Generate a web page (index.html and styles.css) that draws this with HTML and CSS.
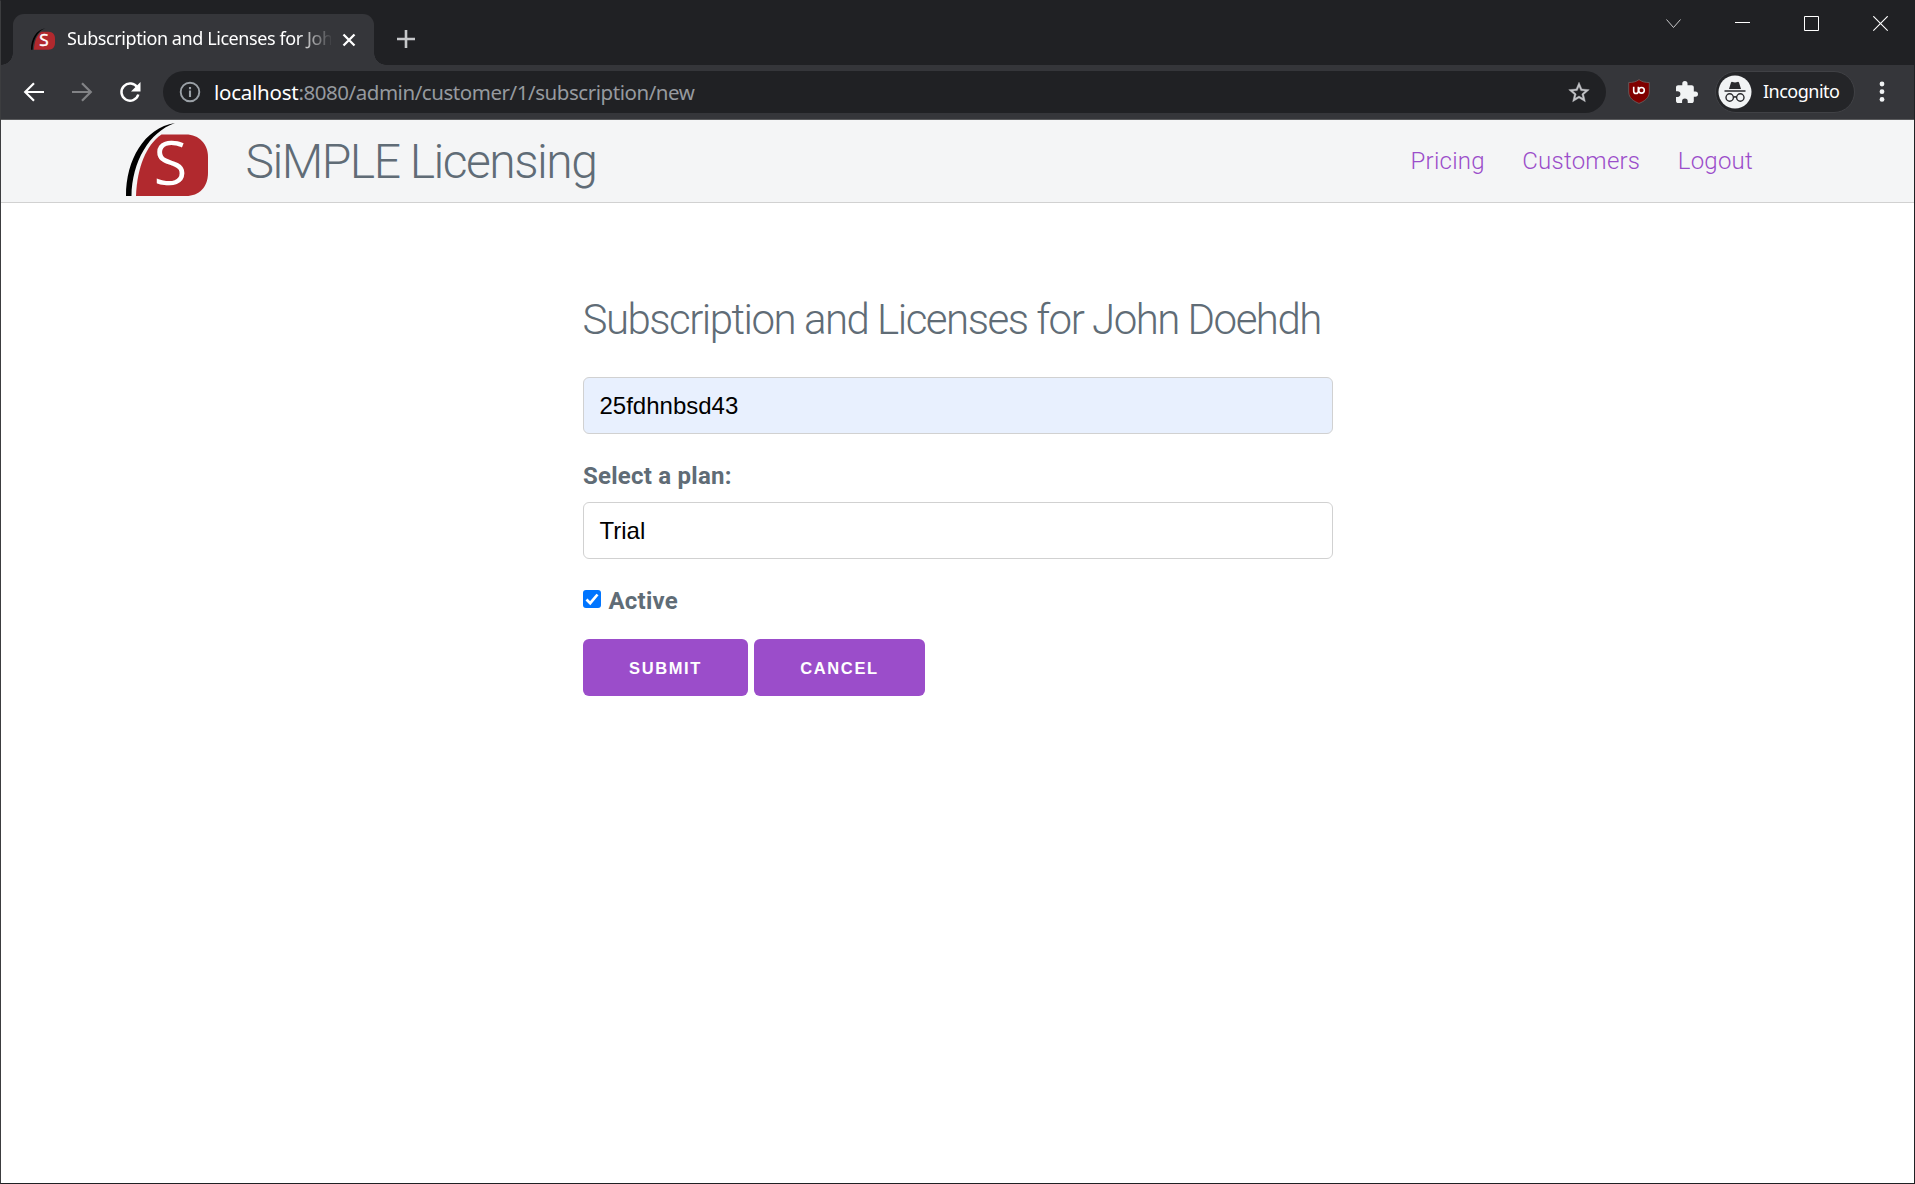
FILE: index.html
```html
<!DOCTYPE html>
<html lang="en">
<head>
<meta charset="utf-8">
<title>Subscription and Licenses for John Doehdh</title>
<link rel="stylesheet" href="styles.css">
</head>
<body>
<svg class="defs" width="0" height="0">
  <symbol id="logo" viewBox="0 0 82 73">
    <path fill="#000" d="M0 73C0 37 18 5 49 0C23 9 6 39 5.500 73Z"/>
    <path fill="#b1292e" d="M10 73C11 45 20 22 35.500 11.500H60C73 11.500 82 21 82 34V50C82 64 73 73 60 73Z"/>
    <text x="28.500" y="61.300" font-family="Open Sans, sans-serif" font-size="58" fill="#fff" stroke="#fff" stroke-width="1.700" textLength="32" lengthAdjust="spacingAndGlyphs">S</text>
  </symbol>
</svg>
<div class="window">
  <div class="tabstrip">
    <div class="tab">
      <svg class="favicon" width="24" height="22"><use href="#logo"/></svg>
      <span class="tab-title">Subscription and Licenses for Joh</span>
      <svg class="tab-close" width="14" height="14" viewBox="0 0 14 14"><path d="M1.500 1.500l11 11M12.500 1.500l-11 11" stroke="#fff" stroke-width="2.300"/></svg>
    </div>
    <svg class="new-tab" width="18" height="18" viewBox="0 0 18 18"><path d="M9 0v18M0 9h18" stroke="#c6c8ca" stroke-width="2.600"/></svg>
    <div class="controls">
      <svg width="15" height="16" viewBox="0 0 15 16"><path d="M.5 3.500l7 8 7-8" fill="none" stroke="#c8c9ca"/></svg>
      <svg width="15" height="16" viewBox="0 0 15 16"><path d="M0 6.500h15" stroke="#fff"/></svg>
      <svg width="15" height="16" viewBox="0 0 15 16"><path d="M.5 .5h14v14H.5z" fill="none" stroke="#fff"/></svg>
      <svg width="15" height="16" viewBox="0 0 15 16"><path d="M.3 .3l14.400 14.400M14.700 .3L.3 14.700" stroke="#fff" stroke-width="1.200"/></svg>
    </div>
  </div>
  <div class="toolbar">
    <svg class="nav-icon" width="22" height="22" viewBox="0 0 22 22"><path d="M21 11H2.500M11 2.200L2.200 11l8.800 8.800" fill="none" stroke="#fff" stroke-width="2.200"/></svg>
    <svg class="nav-icon" width="22" height="22" viewBox="0 0 22 22"><path d="M1 11h18.500M11 2.200l8.800 8.800-8.800 8.800" fill="none" stroke="#828386" stroke-width="2.200"/></svg>
    <svg class="nav-icon" width="22" height="22" viewBox="0 0 22 22"><path d="M18.400 6.600A8.600 8.600 0 1 0 19.300 13.500" fill="none" stroke="#fff" stroke-width="2.500"/><path d="M21.500 1v9.500H12z" fill="#fff"/></svg>
    <div class="address">
      <svg width="22" height="22" viewBox="0 0 22 22"><circle cx="11" cy="11" r="9.300" fill="none" stroke="#9aa0a6" stroke-width="1.900"/><path d="M11 9.600V16M11 6v2.200" stroke="#9aa0a6" stroke-width="2.100"/></svg>
      <span class="url"><span class="host">localhost</span>:8080/admin/customer/1/subscription/new</span>
      <svg width="22" height="22" viewBox="1.300 .8 21.400 21.400"><path fill="#c3c5c8" stroke="#c3c5c8" stroke-width=".4" d="M22 9.240l-7.190-.62L12 2 9.190 8.630 2 9.240l5.460 4.730L5.820 21 12 17.270 18.180 21l-1.630-7.030L22 9.240zM12 15.400l-3.760 2.270 1-4.280-3.320-2.880 4.380-.38L12 6.100l1.710 4.040 4.380.38-3.320 2.880 1 4.280L12 15.400z"/></svg>
    </div>
    <svg class="shield" width="22" height="25" viewBox="0 0 22 25"><path d="M11 .6C8.500 2.700 4.500 3.600.7 3.500V13c0 6 5 9.300 10.300 11.400C16.300 22.300 21.300 19 21.300 13V3.500C17.500 3.600 13.500 2.700 11 .6Z" fill="#800000" stroke="#686464" stroke-width=".8"/><path d="M5.700 7.800v4.400a2.300 2.300 0 0 0 4.600 0V7.800" fill="none" stroke="#fff" stroke-width="1.600"/><circle cx="13.500" cy="11.300" r="2.800" fill="none" stroke="#fff" stroke-width="1.600"/></svg>
    <svg class="puzzle" width="22" height="22" viewBox="2 1 21 21"><path fill="#f1f3f4" d="M20.500 11H19V7c0-1.100-.9-2-2-2h-4V3.500a2.500 2.500 0 0 0-5 0V5H4c-1.100 0-1.990.9-1.990 2v3.800H3.500a2.700 2.700 0 0 1 0 5.400H2V20c0 1.100.9 2 2 2h3.800v-1.500a2.700 2.700 0 0 1 5.400 0V22H17c1.100 0 2-.9 2-2v-4h1.500a2.500 2.500 0 0 0 0-5z"/></svg>
    <div class="incognito">
      <svg width="34" height="34" viewBox="0 0 34 34"><circle cx="17" cy="17" r="16.500" fill="#f1f3f4"/><path d="M11 14L13 7.500Q13.500 6.600 14.500 6.900L17 7.500l2.500-.6q1-.3 1.500.6L23 14ZM6.500 15.200h21v1.500h-21z" fill="#292a2d"/><circle cx="11.700" cy="22.500" r="3.700" fill="none" stroke="#292a2d" stroke-width="1.400"/><circle cx="22.300" cy="22.500" r="3.700" fill="none" stroke="#292a2d" stroke-width="1.400"/><path d="M15.400 22.500q1.600-1.500 3.200 0" fill="none" stroke="#292a2d" stroke-width="1.300"/></svg>
      <span>Incognito</span>
    </div>
    <svg class="menu" width="6" height="22" viewBox="0 0 6 22"><g fill="#f1f3f4"><circle cx="3" cy="3" r="2.400"/><circle cx="3" cy="10.700" r="2.400"/><circle cx="3" cy="18.400" r="2.400"/></g></svg>
  </div>
  <header class="site-header">
    <svg class="logo" width="82" height="73"><use href="#logo"/></svg>
    <div class="brand">SiMPLE Licensing</div>
    <nav class="site-nav"><a>Pricing</a><a>Customers</a><a>Logout</a></nav>
  </header>
  <main class="content">
    <h1>Subscription and Licenses for John Doehdh</h1>
    <input class="field filled" type="text" value="25fdhnbsd43">
    <label class="plan-label">Select a plan:</label>
    <div class="field">Trial</div>
    <label class="active">
      <svg width="18" height="18" viewBox="0 0 18 18"><rect width="18" height="18" rx="3" fill="#0075ff"/><path d="M3.500 9.500l3.700 3.700L14.500 4.500" fill="none" stroke="#fff" stroke-width="2.700"/></svg>
      <span>Active</span>
    </label>
    <div class="buttons"><button class="submit">Submit</button><button class="cancel">Cancel</button></div>
  </main>
</div>
</body>
</html>
```
FILE: styles.css
```css
* { box-sizing: border-box; }
body { margin: 0; background: #fff; overflow: hidden; }
svg { display: block; flex: none; }
.defs { position: absolute; }
.window {
  display: flex;
  flex-direction: column;
  height: 1184px;
  border: 1px solid #202124;
  border-left-color: #3c3d3f;
  font-family: "Open Sans", sans-serif;
}
.tabstrip {
  display: flex;
  height: 64px;
  background: #202124;
}
.tab {
  position: relative;
  display: flex;
  align-items: center;
  width: 361px;
  height: 51px;
  margin: 13px 0 0 12px;
  padding: 0 18px;
  border-radius: 11px 11px 0 0;
  background: #35363a;
}
.tab::before, .tab::after {
  content: "";
  position: absolute;
  bottom: 0;
  width: 12px;
  height: 12px;
}
.tab::before { left: -12px; background: radial-gradient(circle at 0 0, transparent 11.5px, #35363a 12px); }
.tab::after { right: -12px; background: radial-gradient(circle at 100% 0, transparent 11.5px, #35363a 12px); }
.favicon { margin-top: -2px; }
.tab-title {
  width: 264px;
  margin: -3px 0 0 12px;
  white-space: nowrap;
  font: 18px/26px "Noto Sans", sans-serif;
  letter-spacing: -0.42px;
  color: #fff;
  -webkit-mask-image: linear-gradient(90deg, #000 230px, transparent 266px);
  mask-image: linear-gradient(90deg, #000 230px, transparent 266px);
}
.tab-close { margin-left: 11px; }
.new-tab { margin: 29px 0 0 23px; }
.controls { display: flex; gap: 54px; margin: 15px 26px 0 auto; }
.toolbar {
  display: flex;
  align-items: center;
  height: 55px;
  padding: 0 29px 1px 22px;
  border-bottom: 1px solid #5a5b5d;
  background: #35363a;
}
.nav-icon { margin-right: 26px; }
.address {
  display: flex;
  align-items: center;
  width: 1443px;
  height: 42px;
  margin-left: -4px;
  padding: 0 16px;
  border-radius: 21px;
  background: #202124;
}
.url {
  flex: 1;
  margin: 0 0 0 13px;
  font: 20.5px/30px "Noto Sans", sans-serif;
  letter-spacing: -0.45px;
  color: #969a9f;
}
.host { color: #fff; letter-spacing: -0.25px; }
.shield { margin-left: 22px; }
.puzzle { margin-left: 26px; }
.incognito {
  display: flex;
  align-items: center;
  width: 140px;
  height: 42px;
  margin-left: 17px;
  padding-left: 2px;
  border: 1px solid #404145;
  border-radius: 21px;
  background: #242528;
  font: 18px/26px "Noto Sans", sans-serif;
  letter-spacing: -0.5px;
  color: #fff;
}
.incognito span { margin: -2px 0 0 11px; }
.menu { margin-left: auto; }
.site-header {
  display: flex;
  height: 83px;
  padding: 0 161px 0 125px;
  border-bottom: 1px solid #d1d1d1;
  background: #f4f5f6;
  font-family: Roboto, sans-serif;
  font-weight: 300;
}
.logo { margin-top: 3px; }
.brand {
  margin: 13px 0 0 37.5px;
  font-size: 48px;
  line-height: 58px;
  letter-spacing: -1.5px;
  color: #606c76;
}
.site-nav {
  display: flex;
  gap: 37.5px;
  margin: 26px 0 0 auto;
  font-size: 24px;
  line-height: 30px;
  letter-spacing: 0.24px;
  color: #9b4dca;
}
.content {
  flex: 1;
  width: 750px;
  margin: 0 auto;
  padding-top: 90px;
  font-family: Roboto, sans-serif;
  color: #606c76;
}
h1 {
  margin: 0;
  font-size: 42px;
  font-weight: 300;
  line-height: 54px;
  letter-spacing: -1.5px;
  white-space: nowrap;
}
.field {
  display: block;
  width: 750px;
  height: 57px;
  padding: 0 16px;
  border: 1px solid #d1d1d1;
  border-radius: 6px;
  background: #fff;
  font: 24px/55px "Liberation Sans", Arial, sans-serif;
  color: #000;
}
.filled { margin-top: 30px; background: #e8f0fe; }
.plan-label {
  display: block;
  margin: 23px 0 7px;
  padding-left: 0.5px;
  font-size: 24px;
  font-weight: 700;
  line-height: 38px;
  letter-spacing: 0.24px;
}
.active {
  display: flex;
  align-items: center;
  margin-top: 23px;
  font-size: 24px;
  font-weight: 700;
  line-height: 38px;
  letter-spacing: 0.24px;
}
.active svg { margin-top: -4px; }
.active span { margin-left: 8px; }
.buttons { display: flex; gap: 6px; margin-top: 19px; }
button {
  height: 57px;
  padding: 1px 0 0 1px;
  border: 0;
  border-radius: 6px;
  background: #9b4dca;
  font: bold 16.5px/56px "Liberation Sans", Arial, sans-serif;
  letter-spacing: 1.6px;
  text-transform: uppercase;
  color: #fff;
}
.submit { width: 165px; }
.cancel { width: 171px; }
```
